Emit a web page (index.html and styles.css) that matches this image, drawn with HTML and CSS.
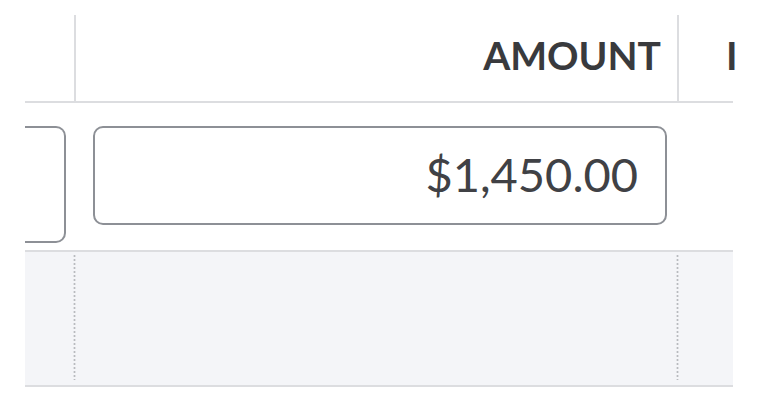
FILE: index.html
```html
<!DOCTYPE html>
<html>
<head>
<meta charset="utf-8">
<link rel="stylesheet" href="styles.css">
</head>
<body>
<div class="frame">
  <div class="grid">
    <div class="cell head c1"></div>
    <div class="cell head c2"><span class="head-text">AMOUNT</span></div>
    <div class="cell head c3"><span class="head-text">I</span></div>

    <div class="cell row c1"><div class="field tall"></div></div>
    <div class="cell row c2"><div class="field amount">$1,450.00</div></div>
    <div class="cell row c3"></div>

    <div class="cell empty c1"><span class="handle"></span></div>
    <div class="cell empty c2"><span class="handle"></span></div>
    <div class="cell empty c3"></div>
  </div>
</div>
</body>
</html>
```

FILE: styles.css
```css
* { box-sizing: border-box; }
html, body { margin: 0; padding: 0; background: #ffffff; }
body { width: 760px; height: 410px; overflow: hidden; font-family: Lato, "Open Sans", sans-serif; color: #393a3d; }

.frame {
  margin-left: 25px;
  margin-top: 15px;
  width: 708px;
}

.grid {
  display: grid;
  grid-template-columns: 51px 603px 54px;
}

.cell { min-width: 0; }

.head {
  height: 88px;
  border-bottom: 2px solid #dcdde0;
  display: flex;
  align-items: flex-start;
  padding-top: 20px;
}
.head.c1, .head.c2 { border-right: 2px solid #dcdde0; }
.head.c2 { justify-content: flex-end; padding-right: 16px; }
.head.c3 { padding-left: 47px; overflow: visible; }

.head-text {
  font-family: Lato, sans-serif;
  font-weight: 700;
  font-size: 39px;
  line-height: 40px;
  color: #393a3d;
  white-space: nowrap;
}

.row {
  padding-top: 23px;
  padding-bottom: 7px;
}
.row.c1 { padding-right: 10px; }
.row.c2 { padding-left: 17px; padding-right: 12px; }

.field {
  border: 2px solid #8d9096;
  border-radius: 10px;
  background: #fff;
}
.field.tall {
  height: 117px;
  border-left: none;
  border-radius: 0 10px 10px 0;
}
.field.amount {
  height: 99px;
  display: flex;
  align-items: center;
  justify-content: flex-end;
  padding-right: 27px;
  padding-bottom: 3px;
  font-family: Lato, sans-serif;
  font-weight: 400;
  font-size: 47px;
  color: #404145;
}

.empty {
  height: 137px;
  background: #f4f5f8;
  border-top: 2px solid #dcdde0;
  border-bottom: 2px solid #dcdde0;
  padding: 2px 0 5px;
  display: flex;
  justify-content: flex-end;
}
.handle {
  display: block;
  width: 4px;
  margin-right: -1px;
  background-image: radial-gradient(circle at 50% 50%, #b9bbbf 0.8px, transparent 1.3px);
  background-size: 3px 4px;
  background-repeat: repeat;
}
```
